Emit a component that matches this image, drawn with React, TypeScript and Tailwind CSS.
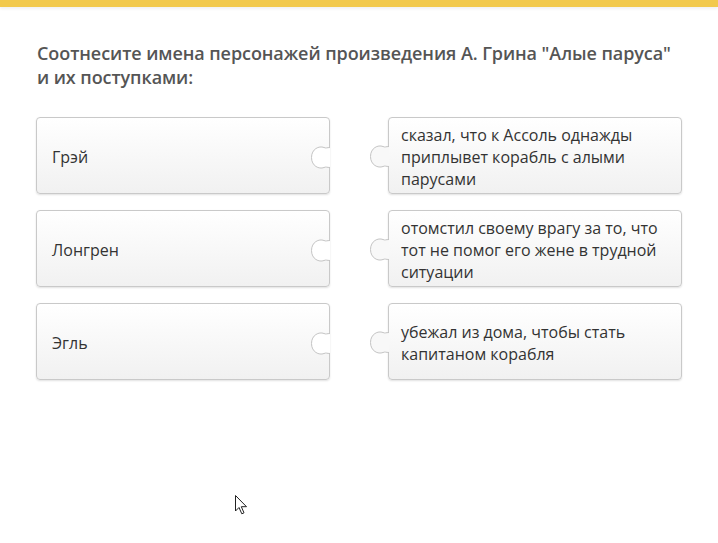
import React from 'react';

// Пары для сопоставления: персонаж слева, поступок справа
const LEFT = ['Грэй', 'Лонгрен', 'Эгль'];
const RIGHT = [
  'сказал, что к Ассоль однажды приплывет корабль с алыми парусами',
  'отомстил своему врагу за то, что тот не помог его жене в трудной ситуации',
  'убежал из дома, чтобы стать капитаном корабля',
];

const PIECE_PATH =
  'M20 1.5 C17 1.5 16 2.5 14 1.5 C9 -0.5 1.5 3 1.5 11.5 C1.5 20 9 23.5 14 21.5 C16 20.5 17 21.5 20 21.5';

function Notch() {
  return (
    <svg
      className="absolute right-[-1px] top-[28px]"
      width="20"
      height="23"
      viewBox="0 0 20 23"
      overflow="visible"
    >
      <path d={PIECE_PATH} fill="#ffffff" stroke="#c4c4c4" strokeWidth="1" />
    </svg>
  );
}

function Knob() {
  return (
    <svg
      className="absolute left-[-20px] top-[27px]"
      width="20"
      height="23"
      viewBox="0 0 20 23"
      overflow="visible"
    >
      <path d={PIECE_PATH} fill="#f8f8f8" stroke="#c4c4c4" strokeWidth="1" />
    </svg>
  );
}

const card =
  'relative h-[77px] flex items-center pt-[2px] rounded-[4px] border border-[#c9c9c9] bg-gradient-to-b from-[#ffffff] to-[#f1f1f1] shadow-[0_1px_2px_rgba(0,0,0,0.12)] text-[16px] leading-[22px] text-[#333333]';

export default function App() {
  return (
    <div className="relative min-h-[543px] bg-white font-['Open_Sans',sans-serif]">
      <div className="h-[7px] bg-[#f2c94c] shadow-[0_2px_3px_rgba(0,0,0,0.06)]" />

      <div className="px-[36px] pt-[34px]">
        <h1 className="pl-px text-[18px] leading-[24px] font-semibold tracking-[-0.08px] text-[#555555]">
          Соотнесите имена персонажей произведения А. Грина "Алые паруса" и их поступками:
        </h1>

        <div className="mt-[28px] grid grid-cols-[294px_294px] gap-x-[58px] gap-y-[16px]">
          {LEFT.map((name, i) => (
            <React.Fragment key={name}>
              <div className={`${card} pl-[15px]`}>
                <span>{name}</span>
                <Notch />
              </div>
              <div className={`${card} pl-[12px] pr-[10px]`}>
                <Knob />
                <span>{RIGHT[i]}</span>
              </div>
            </React.Fragment>
          ))}
        </div>
      </div>

      {/* Курсор мыши */}
      <svg className="absolute left-[235px] top-[495px]" width="13" height="20" viewBox="0 0 13 20">
        <path
          d="M0.5 0.5 L0.5 16 L4 12.5 L6.8 18.8 L9 17.8 L6.3 11.7 L11.5 11.7 Z"
          fill="#ffffff"
          stroke="#222222"
          strokeWidth="1"
          strokeLinejoin="round"
        />
      </svg>
    </div>
  );
}
